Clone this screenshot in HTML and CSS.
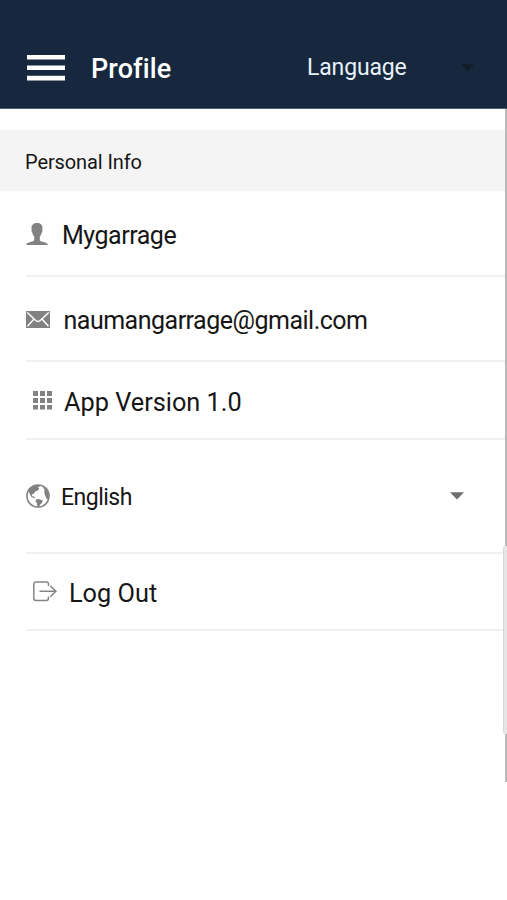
FILE: index.html
```html
<!DOCTYPE html>
<html lang="en">
<head>
<meta charset="utf-8">
<title>Profile</title>
<link rel="stylesheet" href="styles.css">
</head>
<body>
<div class="screen">
  <header class="header">
    <svg class="menu" width="38" height="26" viewBox="0 0 38 26"><path d="M0 0h38v4.600H0zM0 10.400h38V15H0zM0 20.800h38v4.600H0z" fill="#fff"/></svg>
    <h1 class="title">Profile</h1>
    <span class="language">Language</span>
    <svg class="header-arrow" width="13" height="8" viewBox="0 0 13 8"><path d="M0 0h13L6.500 7.500z" fill="#111d29"/></svg>
  </header>
  <h2 class="section">Personal Info</h2>
  <main class="list">
    <div class="row user">
      <svg class="icon" width="22" height="22" viewBox="0 0 22 22"><path d="M11 0C7.500 0 5.400 2 5.500 5.200c0 .8.1 1.200.3 1.800-.6.600-.2 2.200.7 2.900.3 1.800 1 2.900 1.700 3.700v3.600c-.5 1-2.400 1.400-4.500 2C1.400 19.800.4 20.400.2 22h21.600c-.2-1.600-1.200-2.200-3.500-2.800-2.100-.6-4-1-4.500-2v-3.600c.7-.8 1.400-1.900 1.700-3.700.9-.7 1.300-2.300.7-2.900.2-.6.3-1 .3-1.800C16.600 2 14.500 0 11 0z" fill="#828282"/></svg>
      <span class="label">Mygarrage</span>
    </div>
    <div class="row mail">
      <svg class="icon" width="24" height="17" viewBox="0 0 24 17"><path d="M0 0h24v17H0z" fill="#828282"/><path d="M1.200 1.500l8.600 8q2.200 1.800 4.400 0l8.600-8M1.500 15.300l6.300-7M22.500 15.300l-6.300-7" fill="none" stroke="#fff" stroke-width="1.500"/></svg>
      <span class="label">naumangarrage@gmail.com</span>
    </div>
    <div class="row version">
      <svg class="icon" width="19" height="19" viewBox="0 0 19 19"><path d="M0 0h5v5H0zM7 0h5v5H7zM14 0h5v5h-5zM0 7h5v5H0zM7 7h5v5H7zM14 7h5v5h-5zM0 14h5v4.500H0zM7 14h5v4.500H7zM14 14h5v4.500h-5z" fill="#828282"/></svg>
      <span class="label">App Version 1.0</span>
    </div>
    <div class="row locale">
      <svg class="icon" width="24" height="24" viewBox="0 0 24 24"><circle cx="12" cy="12" r="11.100" fill="#fff" stroke="#858585" stroke-width="1.500"/><path d="M4.500 4.500L8 1.800l5-.8.8 1.600-2 .8 1.500 1.200-1.500 2-2.500.8-1.800 2.500-1.700.3.300 2 2 .3 1.200 1.700-1.500-.2-2.600-1.200L3.500 9.500 2.700 7z" fill="#808080"/><path d="M10 15.500l2.800-.4 4 1.500-.8 2.400-1.800 1.400-1.200 2.500-1.700-.1-.3-3.500-1.500-2z" fill="#808080"/><path d="M16.500 2.500l3.200 2.300 2.500 4 .5 4-1.500 3.200-1.400-3-1-2.500-.6-2.700.4-2-.9-1.300z" fill="#808080"/></svg>
      <span class="label">English</span>
      <svg class="arrow" width="14" height="8" viewBox="0 0 14 8"><path d="M0 .2h14L7 7.500z" fill="#707070"/></svg>
    </div>
    <div class="row logout">
      <svg class="icon" width="24" height="21" viewBox="0 0 24 21"><path d="M15.500 5V3.200Q15.500 1 13.300 1H3Q.8 1 .8 3.200v14Q.8 19.400 3 19.400h10.300q2.200 0 2.200-2.200v-1.700M6.500 10.300H23M17.300 4.900l5.600 5.400-5.600 5.400" fill="none" stroke="#858585" stroke-width="1.500"/></svg>
      <span class="label">Log Out</span>
    </div>
  </main>
  <div class="scroll-track"></div>
  <div class="scroll-thumb"></div>
</div>
</body>
</html>
```
FILE: styles.css
```css
* { box-sizing: border-box; }
body { margin: 0; background: #fff; font-family: Roboto, sans-serif; color: #161616; }
.screen { position: relative; height: 900px; overflow: hidden; }
svg { display: block; flex: none; }
.header { height: 109px; padding: 28px 33px 0 27px; display: flex; align-items: center; background: #17273d; border-bottom: 1px solid #515c6e; color: #fff; }
.title { margin: 0 0 0 26px; padding-top: 1px; font-size: 27px; letter-spacing: 0.1px; line-height: 32px; font-weight: 500; width: 216px; }
.language { font-size: 23px; letter-spacing: -0.15px; line-height: 30px; color: #e8f0fa; }
.header-arrow { margin-left: auto; }
.section { margin: 21px 0 0; height: 61px; padding: 2px 25px 0; background: #f4f4f4; font-size: 20px; letter-spacing: -0.1px; font-weight: 400; line-height: 60px; }
.row { margin-left: 26px; display: flex; align-items: center; border-bottom: 2px solid #f0f0f0; white-space: nowrap; }
.label { padding-top: 3px; }
.user { height: 86px; padding-top: 1px; font-size: 25px; letter-spacing: -0.48px; }
.user .label { margin-left: 14px; }
.mail { height: 85px; padding-top: 1px; font-size: 25px; letter-spacing: -0.5px; }
.mail .label { margin-left: 13.5px; }
.version { height: 78px; padding-left: 7px; font-size: 25.3px; }
.version .label { margin-left: 12px; padding-top: 4px; }
.locale { height: 114px; padding-right: 43px; font-size: 23px; letter-spacing: -0.5px; }
.locale .label { margin-left: 11px; padding-top: 2px; }
.arrow { margin-left: auto; }
.logout { height: 77px; padding-left: 7px; font-size: 25.3px; }
.logout .label { margin-left: 12px; }
.scroll-track { position: absolute; right: 0; top: 109px; width: 2px; height: 673px; background: #b9b9b9; }
.scroll-thumb { position: absolute; right: 0; top: 546px; width: 4px; height: 188px; background: #e6e6e6; border-left: 1px solid #d6d6d6; border-radius: 3px 0 0 3px; }
```
